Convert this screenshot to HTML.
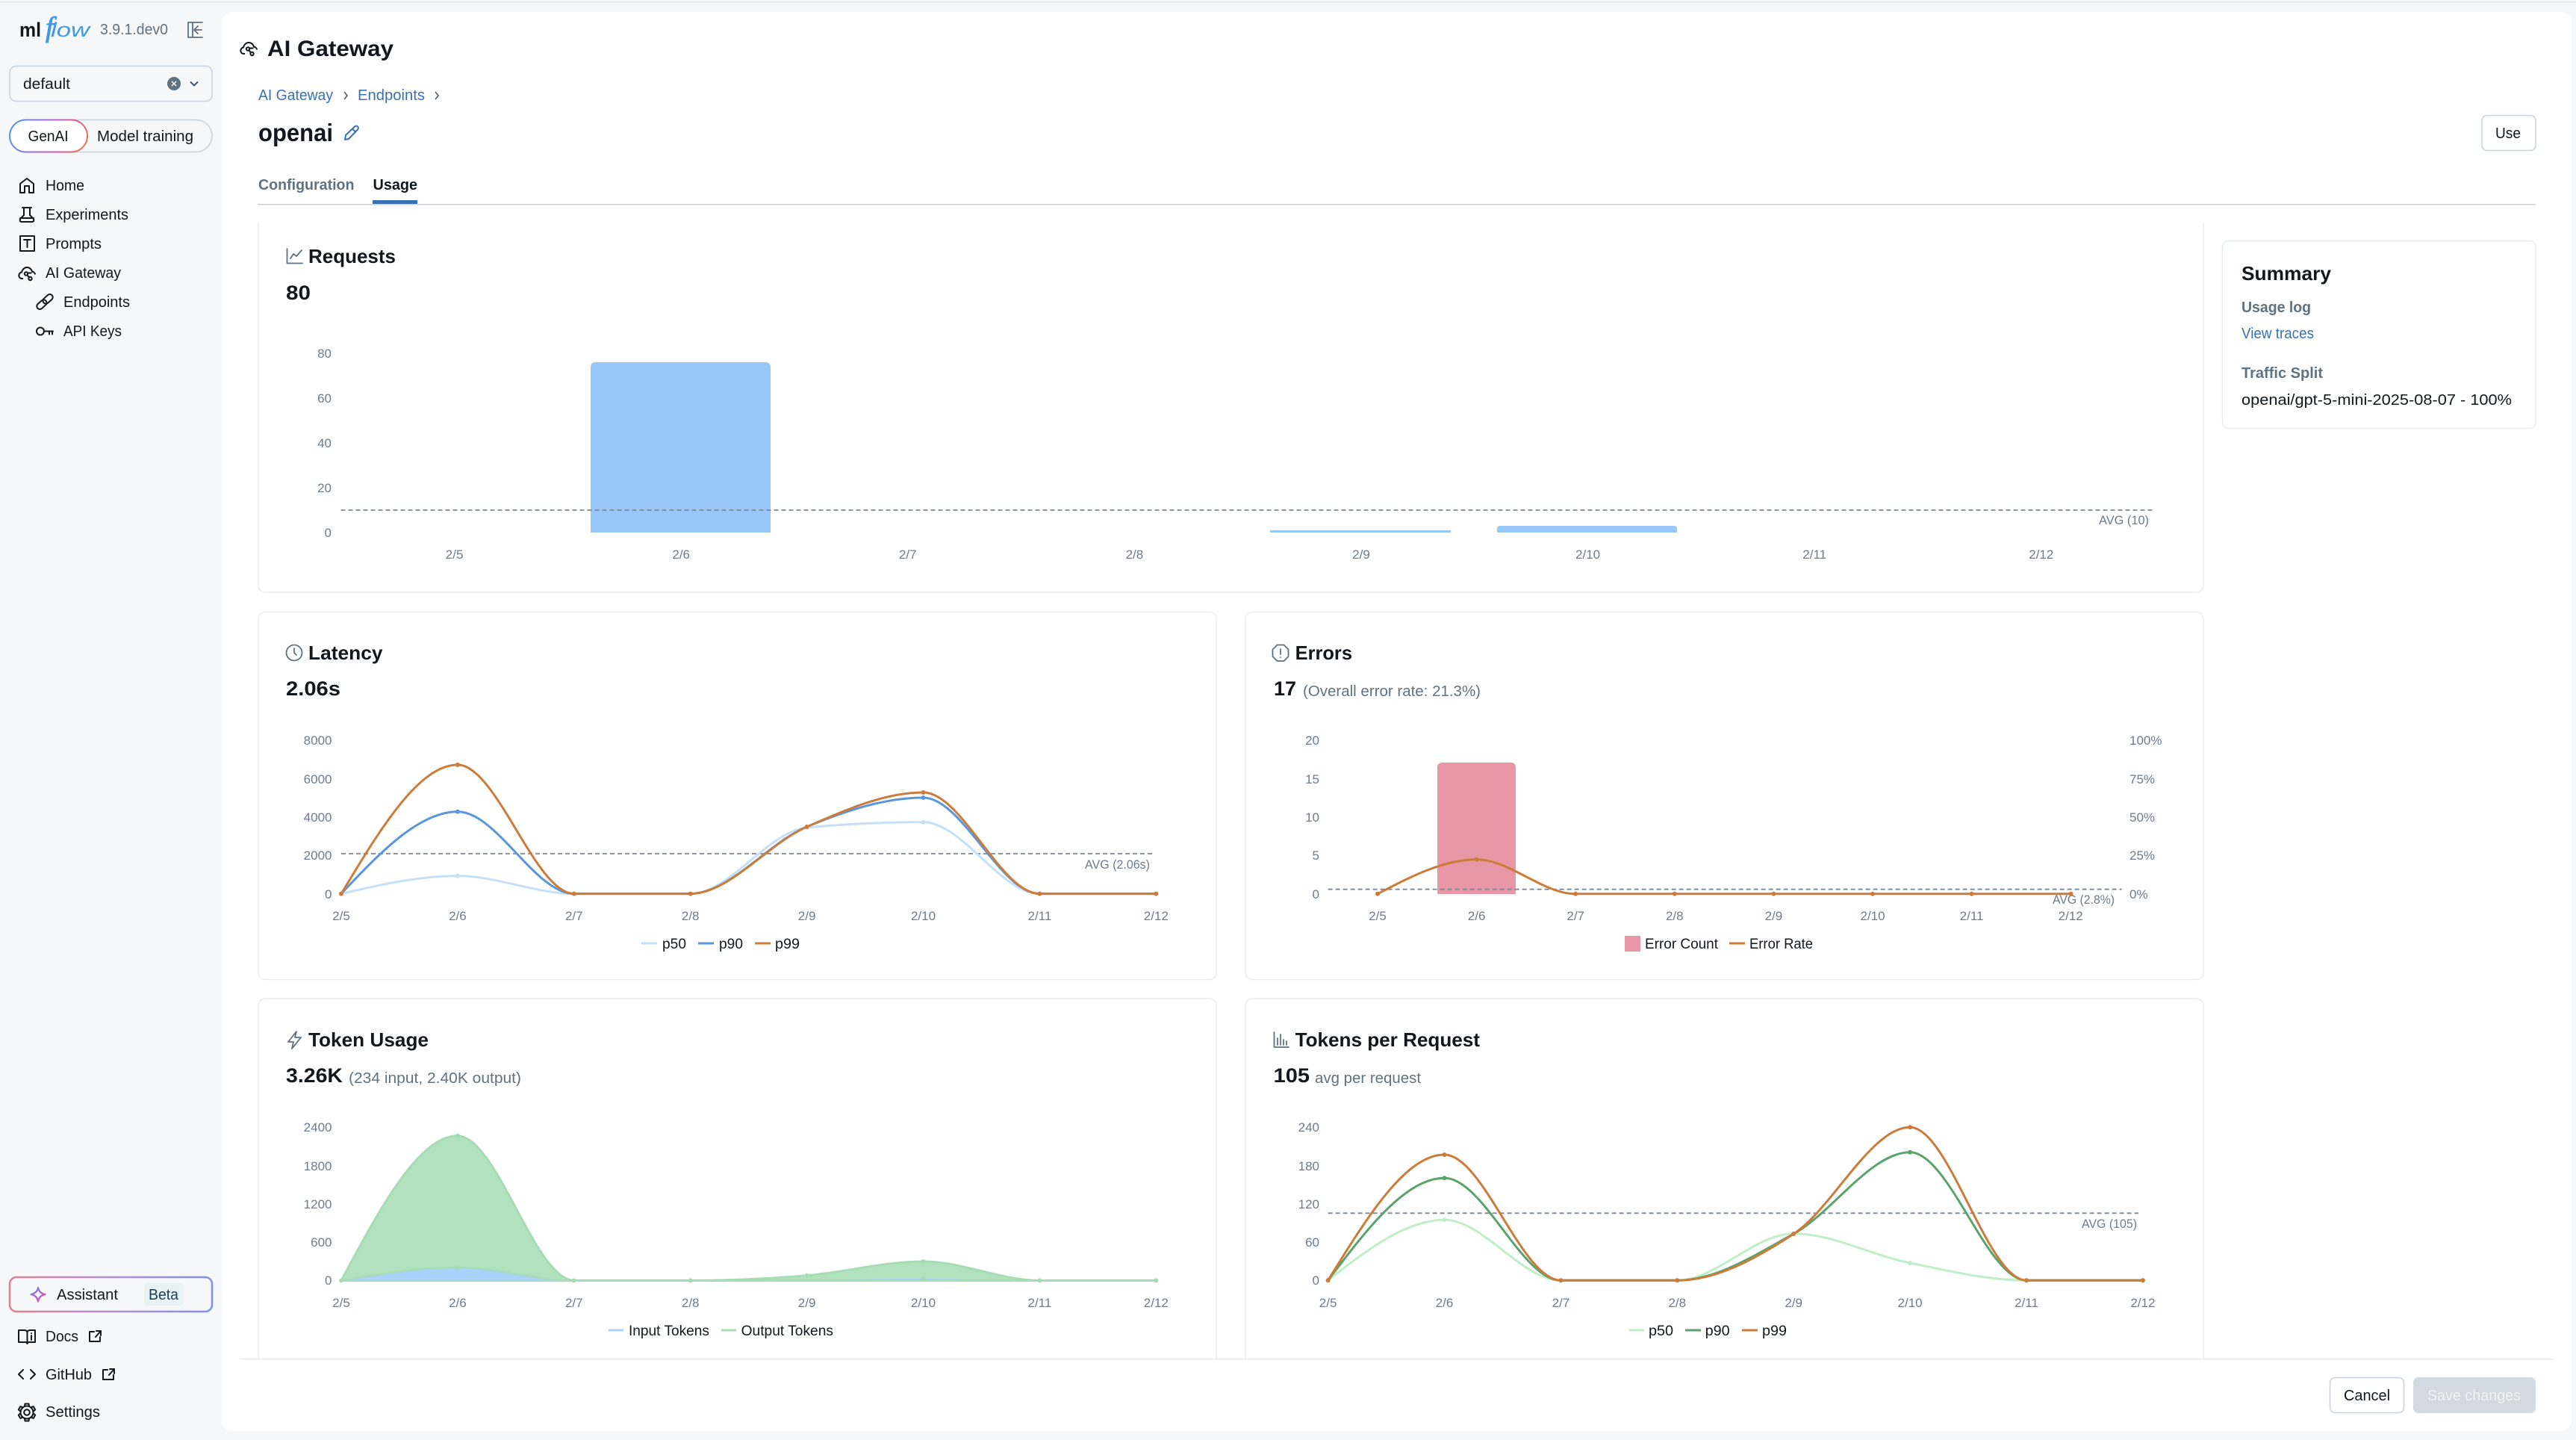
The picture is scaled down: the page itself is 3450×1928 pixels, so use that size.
<!DOCTYPE html>
<html><head><meta charset="utf-8"><title>AI Gateway</title>
<style>
html,body{margin:0;padding:0;background:#f6f7f9;width:3450px;height:1928px;overflow:hidden}
svg{display:block;font-family:"Liberation Sans",sans-serif}
.n{font-size:20px;fill:#11171c}
.s{font-size:20px;fill:#5f7281}
.t{font-size:26px;font-weight:700;fill:#11171c}
.v{font-size:27px;font-weight:700;fill:#11171c}
.b{font-size:20px;fill:#3a70b5}
.sb{font-size:20px;font-weight:700;fill:#5f7281}
.y,.x,.a{font-size:17px;fill:#6d7b8c}
.y{text-anchor:end}.x{text-anchor:middle}
.l{font-size:19px;fill:#11171c}
.ic{fill:none;stroke:#11171c;stroke-width:2;stroke-linecap:round;stroke-linejoin:round}
.ig{fill:none;stroke:#5f7281;stroke-width:1.8;stroke-linecap:round;stroke-linejoin:round}
.card{fill:#fff;stroke:#e8ecf1;stroke-width:1.5}
.avg{stroke:#7e8894;stroke-width:1.8;stroke-dasharray:6 4;fill:none}
.ln{fill:none;stroke-width:3}
.dt{fill:none;stroke-width:6;stroke-linecap:round}
</style></head><body>
<svg width="3450" height="1928" viewBox="0 0 3450 1928" xmlns="http://www.w3.org/2000/svg">
<defs>
<linearGradient id="gg" gradientUnits="userSpaceOnUse" x1="12" y1="160" x2="117" y2="204"><stop offset="0" stop-color="#4a9be0"/><stop offset=".45" stop-color="#a76ae0"/><stop offset=".75" stop-color="#e05f8c"/><stop offset="1" stop-color="#f0764a"/></linearGradient>
<linearGradient id="ag" gradientUnits="userSpaceOnUse" x1="12" y1="0" x2="284" y2="0"><stop offset="0" stop-color="#e0808a"/><stop offset=".5" stop-color="#b48cd6"/><stop offset="1" stop-color="#7c92ee"/></linearGradient>
<linearGradient id="sg" gradientUnits="userSpaceOnUse" x1="41" y1="1725" x2="61" y2="1742"><stop offset="0" stop-color="#5c8ff0"/><stop offset=".5" stop-color="#b060e0"/><stop offset="1" stop-color="#f0506a"/></linearGradient>
<g id="gw"><path d="M5 16C1.5 15.5.5 12 2 9.500 3 8 4 7.500 5 7.500 6 3.500 9 1 12 1c3 0 6 2 7 5.500 2 .5 4 2 4 4" fill="none"/><path d="M5 16H7" fill="none"/><circle cx="11" cy="9.500" r="2.200" fill="none"/><circle cx="16.500" cy="16" r="2.200" fill="none"/><path d="M12.500 11.500l2.700 2.800M13.500 8.500h5" fill="none"/></g>
</defs>

<rect width="3450" height="1928" fill="#f6f7f9"/>
<rect y="2" width="3450" height="1.500" fill="#e3e5e7"/>
<rect x="297" y="16" width="3147" height="1900" rx="14" fill="#fff"/>

<!-- sidebar header -->
<text x="26" y="49" font-size="27" font-weight="700" fill="#11171c" textLength="29" lengthAdjust="spacingAndGlyphs">ml</text>
<text x="61" y="49" font-family="Liberation Serif" font-size="38" font-style="italic" fill="#3d9be9" stroke="#3d9be9" stroke-width=".9">f</text>
<text x="68" y="49" font-size="27" font-style="italic" fill="#3d9be9" textLength="52" lengthAdjust="spacingAndGlyphs">low</text>
<text class="s" x="134" y="46" textLength="91" lengthAdjust="spacingAndGlyphs">3.9.1.dev0</text>
<path class="ig" stroke-width="2.400" d="M271 30H252V50H271M258 30V50M270 40h-9M265 35l-5 5 5 5"/>

<rect x="13" y="88.500" width="271" height="47" rx="8" fill="#f6f7f9" stroke="#c8d2de" stroke-width="1.500"/>
<text class="n" x="31" y="119" textLength="63" lengthAdjust="spacingAndGlyphs">default</text>
<circle cx="233" cy="112" r="9" fill="#5f7281"/>
<path d="M230 109l6 6M236 109l-6 6" stroke="#fff" stroke-width="1.500"/>
<path d="M255 109.500l5 5 5-5" fill="none" stroke="#44546a" stroke-width="2"/>

<rect x="13" y="160.500" width="271" height="43" rx="21.500" fill="#f6f7f9" stroke="#c8d2de" stroke-width="1.500"/>
<rect x="13" y="160.500" width="104" height="43" rx="21.500" fill="#fff" stroke="url(#gg)" stroke-width="2"/>
<text class="n" x="37.500" y="189" textLength="54" lengthAdjust="spacingAndGlyphs">GenAI</text>
<text class="n" x="130" y="189" textLength="129" lengthAdjust="spacingAndGlyphs">Model training</text>

<!-- nav -->
<path class="ic" d="M36 239L27 246V258H33V249H39V258H45V246Z"/>
<text class="n" x="61" y="255" textLength="52" lengthAdjust="spacingAndGlyphs">Home</text>
<path class="ic" d="M30 278H42M32 278V288L27 293Q26 297 29 297H43Q46 297 45 293L40 288V278M27 292H45"/>
<text class="n" x="61" y="294" textLength="111" lengthAdjust="spacingAndGlyphs">Experiments</text>
<rect class="ic" x="27" y="316" width="19" height="20"/>
<path class="ic" d="M32 321H41M36.500 321V331"/>
<text class="n" x="61" y="333" textLength="75" lengthAdjust="spacingAndGlyphs">Prompts</text>
<use href="#gw" x="24" y="357" stroke="#11171c" stroke-width="2"/>
<text class="n" x="61" y="372" textLength="101" lengthAdjust="spacingAndGlyphs">AI Gateway</text>
<g class="ic" transform="rotate(-42 60 404)"><rect x="47" y="400" width="15" height="8" rx="4"/><rect x="58" y="400" width="15" height="8" rx="4"/></g>
<text class="n" x="85" y="411" textLength="89" lengthAdjust="spacingAndGlyphs">Endpoints</text>
<circle class="ic" cx="54" cy="443.500" r="5"/>
<path class="ic" d="M59 443.500H71M66 443.500v4M70 443.500v4"/>
<text class="n" x="85" y="450" textLength="78" lengthAdjust="spacingAndGlyphs">API Keys</text>

<!-- sidebar bottom -->
<rect x="13" y="1710" width="271" height="46" rx="9" fill="#f6f7f9" stroke="url(#ag)" stroke-width="2.500"/>
<path d="M51 1724Q52.500 1731.500 60.500 1733 52.500 1734.500 51 1742.500 49.500 1734.500 41.500 1733 49.500 1731.500 51 1724Z" fill="none" stroke="url(#sg)" stroke-width="2.200" stroke-linejoin="round"/>
<text class="n" x="76" y="1740" textLength="82" lengthAdjust="spacingAndGlyphs">Assistant</text>
<rect x="193" y="1718" width="53" height="30" rx="5" fill="#e8f2f4"/>
<text x="199" y="1740" font-size="20" fill="#1c3f4e" textLength="40" lengthAdjust="spacingAndGlyphs">Beta</text>
<path class="ic" d="M25 1781h8q3 0 3.500 3 .5-3 3.500-3h7v16h-8q-2 0-2.500 2-.5-2-2.500-2h-9zM36.500 1784v14M42 1788v6M42 1785v.1"/>
<text class="n" x="61" y="1796" textLength="44" lengthAdjust="spacingAndGlyphs">Docs</text>
<path class="ic" d="M126 1783H120V1796H134V1790M128 1790L135 1782M129 1782H135V1788"/>
<path class="ic" d="M31 1834L25 1840L31 1846M41 1834L47 1840L41 1846"/>
<text class="n" x="61" y="1847" textLength="62" lengthAdjust="spacingAndGlyphs">GitHub</text>
<path class="ic" d="M144 1834H138V1847H152V1841M146 1841L153 1833M147 1833H153V1839"/>
<g class="ic" transform="translate(36 1891)"><circle r="8.500"/><circle r="3.800"/>
<path d="M-3-8.500L-2.500-11.500H2.500L3-8.500"/><path d="M-3-8.500L-2.500-11.500H2.500L3-8.500" transform="rotate(60)"/><path d="M-3-8.500L-2.500-11.500H2.500L3-8.500" transform="rotate(120)"/><path d="M-3-8.500L-2.500-11.500H2.500L3-8.500" transform="rotate(180)"/><path d="M-3-8.500L-2.500-11.500H2.500L3-8.500" transform="rotate(240)"/><path d="M-3-8.500L-2.500-11.500H2.500L3-8.500" transform="rotate(300)"/></g>
<text class="n" x="61" y="1897" textLength="73" lengthAdjust="spacingAndGlyphs">Settings</text>

<!-- header -->
<use href="#gw" x="321" y="56" stroke="#11171c" stroke-width="2"/>
<text x="358" y="75" font-size="30" font-weight="700" fill="#11171c" textLength="169" lengthAdjust="spacingAndGlyphs">AI Gateway</text>
<text class="b" x="346" y="134" textLength="100" lengthAdjust="spacingAndGlyphs">AI Gateway</text>
<path d="M461 123l4 5-4 5M583 123l4 5-4 5" fill="none" stroke="#44546a" stroke-width="1.500"/>
<text class="b" x="479" y="134" textLength="90" lengthAdjust="spacingAndGlyphs">Endpoints</text>
<text x="346" y="189" font-size="33" font-weight="700" fill="#11171c" textLength="100" lengthAdjust="spacingAndGlyphs">openai</text>
<path d="M462 187l1-6L475 169.500a2.500 2.500 0 0 1 4 4L467 186ZM472 172.500l4 4" fill="none" stroke="#3a70b5" stroke-width="2" stroke-linejoin="round"/>
<text class="sb" x="346" y="254" textLength="128.500" lengthAdjust="spacingAndGlyphs">Configuration</text>
<text x="499.500" y="254" font-size="20" font-weight="700" fill="#11171c" textLength="59.500" lengthAdjust="spacingAndGlyphs">Usage</text>
<rect x="345" y="273" width="3051" height="1.500" fill="#c8d2de"/>
<rect x="499" y="268" width="60" height="5" fill="#3a70b5"/>
<rect x="3324" y="154.500" width="72" height="47" rx="7" fill="#fff" stroke="#c8d2de" stroke-width="1.500"/>
<text class="n" x="3342" y="185" textLength="34" lengthAdjust="spacingAndGlyphs">Use</text>

<!-- Requests card -->
<path d="M346 298V784a9 9 0 0 0 9 9H2942a9 9 0 0 0 9-9V298" fill="#fff" stroke="#e8ecf1" stroke-width="1.500"/>
<path class="ig" d="M384.500 333V352.500H405M389 346l4-6 4 3 7-8"/>
<text class="t" x="413" y="352" textLength="117" lengthAdjust="spacingAndGlyphs">Requests</text>
<text class="v" x="383" y="401" textLength="33" lengthAdjust="spacingAndGlyphs">80</text>
<g class="y"><text x="444" y="479">80</text><text x="444" y="539">60</text><text x="444" y="599">40</text><text x="444" y="659">20</text><text x="444" y="719">0</text></g>
<path d="M791 713V491a6 6 0 0 1 6-6H1026a6 6 0 0 1 6 6V713Z" fill="#99c7fa"/>
<rect x="1701" y="710" width="242" height="3" fill="#99c7fa"/>
<path d="M2005 713V708a4 4 0 0 1 4-4H2242a4 4 0 0 1 4 4V713Z" fill="#99c7fa"/>
<path class="avg" d="M456.500 683H2886"/>
<text class="a" x="2811" y="702" textLength="67" lengthAdjust="spacingAndGlyphs">AVG (10)</text>
<g class="x"><text x="608.600" y="748">2/5</text><text x="912.200" y="748">2/6</text><text x="1215.800" y="748">2/7</text><text x="1519.400" y="748">2/8</text><text x="1823" y="748">2/9</text><text x="2126.600" y="748">2/10</text><text x="2430.200" y="748">2/11</text><text x="2733.800" y="748">2/12</text></g>

<!-- Latency card -->
<rect class="card" x="346" y="819.500" width="1283" height="492" rx="9"/>
<circle class="ig" cx="394" cy="874" r="10.500"/>
<path class="ig" d="M394 868v6l3 3"/>
<text class="t" x="413" y="883" textLength="99.500" lengthAdjust="spacingAndGlyphs">Latency</text>
<text class="v" x="383" y="931" textLength="73" lengthAdjust="spacingAndGlyphs">2.06s</text>
<g class="y"><text x="444.500" y="997">8000</text><text x="444.500" y="1049">6000</text><text x="444.500" y="1100">4000</text><text x="444.500" y="1151">2000</text><text x="444.500" y="1203">0</text></g>
<path class="avg" d="M457 1143H1544"/>
<text class="a" x="1453" y="1163" textLength="87" lengthAdjust="spacingAndGlyphs">AVG (2.06s)</text>
<g class="x"><text x="457" y="1232">2/5</text><text x="612.900" y="1232">2/6</text><text x="768.800" y="1232">2/7</text><text x="924.700" y="1232">2/8</text><text x="1080.600" y="1232">2/9</text><text x="1236.500" y="1232">2/10</text><text x="1392.400" y="1232">2/11</text><text x="1548.300" y="1232">2/12</text></g>
<g stroke="#c4e0f8">
<path class="ln" d="M457 1196.600C509 1184.600 561 1172.700 612.900 1172.700C665 1172.700 717 1196.600 768.800 1196.600L924.700 1196.600C976.700 1196.600 1028.600 1112.900 1080.600 1108C1132.600 1103.100 1184.500 1100.700 1236.500 1100.700C1288.500 1100.700 1340.400 1196.600 1392.400 1196.600L1548.300 1196.600"/>
<path class="dt" d="M457 1196.600h0M612.900 1172.700h0M1080.600 1108h0M1236.500 1100.700h0"/></g>
<g stroke="#5a96dc">
<path class="ln" d="M457 1196.600C509 1141.600 561 1086.700 612.900 1086.700C665 1086.700 717 1196.600 768.800 1196.600L924.700 1196.600C976.700 1196.600 1028.600 1128.400 1080.600 1107C1132.600 1085.600 1184.500 1068 1236.500 1068C1288.500 1068 1340.400 1196.600 1392.400 1196.600L1548.300 1196.600"/>
<path class="dt" d="M612.900 1086.700h0M1236.500 1068h0"/></g>
<g stroke="#cb7c3a">
<path class="ln" d="M457 1196.600C509 1110.300 561 1024 612.900 1024C665 1024 717 1196.600 768.800 1196.600L924.700 1196.600C976.700 1196.600 1028.600 1129.600 1080.600 1107C1132.600 1084.400 1184.500 1061 1236.500 1061C1288.500 1061 1340.400 1196.600 1392.400 1196.600L1548.300 1196.600"/>
<path class="dt" d="M457 1196.600h0M612.900 1024h0M768.800 1196.600h0M924.700 1196.600h0M1080.600 1107h0M1236.500 1061h0M1392.400 1196.600h0M1548.300 1196.600h0"/></g>
<rect x="859" y="1261.500" width="21" height="3" fill="#c4e0f8"/><text class="l" x="887" y="1270" textLength="32" lengthAdjust="spacingAndGlyphs">p50</text>
<rect x="935" y="1261.500" width="21" height="3" fill="#5a96dc"/><text class="l" x="963" y="1270" textLength="32" lengthAdjust="spacingAndGlyphs">p90</text>
<rect x="1011" y="1261.500" width="21" height="3" fill="#cb7c3a"/><text class="l" x="1038" y="1270" textLength="33" lengthAdjust="spacingAndGlyphs">p99</text>

<!-- Errors card -->
<rect class="card" x="1668" y="819.500" width="1283" height="492" rx="9"/>
<path class="ig" d="M1710.500 863.500h9l6 6v9.500l-6 6h-9l-6-6v-9.500ZM1715 869v7M1715 880v.1"/>
<text class="t" x="1734.600" y="883" textLength="76.400" lengthAdjust="spacingAndGlyphs">Errors</text>
<text class="v" x="1706" y="931" textLength="30" lengthAdjust="spacingAndGlyphs">17</text>
<text class="s" x="1745" y="932" textLength="238" lengthAdjust="spacingAndGlyphs">(Overall error rate: 21.3%)</text>
<g class="y"><text x="1767" y="997">20</text><text x="1767" y="1049">15</text><text x="1767" y="1100">10</text><text x="1767" y="1151">5</text><text x="1767" y="1203">0</text></g>
<g class="a"><text x="2852" y="997">100%</text><text x="2852" y="1049">75%</text><text x="2852" y="1100">50%</text><text x="2852" y="1151">25%</text><text x="2852" y="1203">0%</text></g>
<path d="M1925 1197V1027a6 6 0 0 1 6-6H2024a6 6 0 0 1 6 6V1197Z" fill="#e996a6"/>
<path class="avg" d="M1778.600 1190.700H2841.600"/>
<text class="a" x="2749" y="1210" textLength="83" lengthAdjust="spacingAndGlyphs">AVG (2.8%)</text>
<g class="x"><text x="1845" y="1232">2/5</text><text x="1977.600" y="1232">2/6</text><text x="2110.200" y="1232">2/7</text><text x="2242.800" y="1232">2/8</text><text x="2375.400" y="1232">2/9</text><text x="2508" y="1232">2/10</text><text x="2640.600" y="1232">2/11</text><text x="2773.200" y="1232">2/12</text></g>
<g stroke="#cb7c3a">
<path class="ln" d="M1845 1196.800C1889.200 1173.750 1933.400 1150.700 1977.600 1150.700C2021.800 1150.700 2066 1196.800 2110.200 1196.800L2773.600 1196.800"/>
<path class="dt" d="M1845 1196.800h0M1977.600 1150.700h0M2110.200 1196.800h0M2242.800 1196.800h0M2375.400 1196.800h0M2508 1196.800h0M2640.600 1196.800h0M2773.600 1196.800h0"/></g>
<rect x="2176" y="1253" width="21" height="21" fill="#e996a6"/>
<text class="l" x="2203" y="1270" textLength="98" lengthAdjust="spacingAndGlyphs">Error Count</text>
<rect x="2316" y="1261.500" width="21" height="3" fill="#cb7c3a"/>
<text class="l" x="2343" y="1270" textLength="85" lengthAdjust="spacingAndGlyphs">Error Rate</text>

<!-- Token Usage card -->
<path d="M346 1819V1346a9 9 0 0 1 9-9H1620a9 9 0 0 1 9 9V1819" fill="#fff" stroke="#e8ecf1" stroke-width="1.500"/>
<path class="ig" d="M397 1381L386 1395H393L391 1404L403 1389H395Z"/>
<text class="t" x="413" y="1401" textLength="161" lengthAdjust="spacingAndGlyphs">Token Usage</text>
<text class="v" x="383" y="1449" textLength="76" lengthAdjust="spacingAndGlyphs">3.26K</text>
<text class="s" x="467" y="1450" textLength="231" lengthAdjust="spacingAndGlyphs">(234 input, 2.40K output)</text>
<g class="y"><text x="444.500" y="1515">2400</text><text x="444.500" y="1567">1800</text><text x="444.500" y="1618">1200</text><text x="444.500" y="1669">600</text><text x="444.500" y="1720">0</text></g>
<g class="x"><text x="457" y="1750">2/5</text><text x="612.900" y="1750">2/6</text><text x="768.800" y="1750">2/7</text><text x="924.700" y="1750">2/8</text><text x="1080.600" y="1750">2/9</text><text x="1236.500" y="1750">2/10</text><text x="1392.400" y="1750">2/11</text><text x="1548.300" y="1750">2/12</text></g>
<path d="M457 1714.500C509 1617.600 561 1520.700 612.900 1520.700C665 1520.700 717 1714.500 768.800 1714.500L924.700 1714.500C976.700 1714.500 1028.600 1712 1080.600 1707.700C1132.600 1703.400 1184.500 1689 1236.500 1689C1288.500 1689 1340.400 1714.500 1392.400 1714.500L1548.300 1714.500Z" fill="#b2e2bd" stroke="#a6dcb3" stroke-width="3"/>
<path d="M457 1714.500C509 1705.750 561 1697 612.900 1697C665 1697 717 1714.500 768.800 1714.500L924.700 1714.500C976.700 1714.500 1028.600 1714 1080.600 1713.500C1132.600 1713 1184.500 1712 1236.500 1712C1288.500 1712 1340.400 1714.500 1392.400 1714.500Z" fill="#abd0f9"/>
<path d="M457 1714.500C509 1705.750 561 1697 612.900 1697C665 1697 717 1714.500 768.800 1714.500" fill="none" stroke="#a9dab9" stroke-width="2.500"/>
<path d="M768.800 1714.500H1548.300" stroke="#a6dcb3" stroke-width="3"/>
<path class="dt" stroke="#a6dcb3" d="M457 1714.500h0M612.900 1520.700h0M612.900 1697h0M768.800 1714.500h0M924.700 1714.500h0M1080.600 1707.700h0M1236.500 1689h0M1236.500 1712h0M1392.400 1714.500h0M1548.300 1714.500h0"/>
<rect x="815" y="1779.500" width="20" height="3" fill="#abd0f9"/><text class="l" x="842" y="1788" textLength="108" lengthAdjust="spacingAndGlyphs">Input Tokens</text>
<rect x="966" y="1779.500" width="20" height="3" fill="#a6dcb3"/><text class="l" x="992.600" y="1788" textLength="123.400" lengthAdjust="spacingAndGlyphs">Output Tokens</text>

<!-- Tokens per Request -->
<path d="M1668 1819V1346a9 9 0 0 1 9-9H2942a9 9 0 0 1 9 9V1819" fill="#fff" stroke="#e8ecf1" stroke-width="1.500"/>
<path class="ig" d="M1706.500 1382V1402H1726M1711 1390V1399M1715 1385V1399M1719 1392V1399M1723 1394V1399"/>
<text class="t" x="1734.600" y="1401" textLength="247.400" lengthAdjust="spacingAndGlyphs">Tokens per Request</text>
<text class="v" x="1705.600" y="1449" textLength="48.400" lengthAdjust="spacingAndGlyphs">105</text>
<text class="s" x="1761" y="1450" textLength="142" lengthAdjust="spacingAndGlyphs">avg per request</text>
<g class="y"><text x="1767" y="1515">240</text><text x="1767" y="1567">180</text><text x="1767" y="1618">120</text><text x="1767" y="1669">60</text><text x="1767" y="1720">0</text></g>
<path class="avg" d="M1778.600 1624.300H2864"/>
<text class="a" x="2788" y="1644" textLength="74" lengthAdjust="spacingAndGlyphs">AVG (105)</text>
<g class="x"><text x="1778.600" y="1750">2/5</text><text x="1934.500" y="1750">2/6</text><text x="2090.400" y="1750">2/7</text><text x="2246.300" y="1750">2/8</text><text x="2402.200" y="1750">2/9</text><text x="2558.100" y="1750">2/10</text><text x="2714" y="1750">2/11</text><text x="2869.900" y="1750">2/12</text></g>
<g stroke="#c1edc9">
<path class="ln" d="M1778.600 1714.300C1830.600 1673.800 1882.500 1633.300 1934.500 1633.300C1986.500 1633.300 2038.400 1714.300 2090.400 1714.300L2246.300 1714.300C2298.300 1714.300 2350.200 1651.700 2402.200 1651.700C2454.200 1651.700 2506.100 1680.600 2558.100 1691C2610.100 1701.400 2662 1714.300 2714 1714.300L2869.900 1714.300"/>
<path class="dt" d="M1934.500 1633.300h0M2402.200 1651.700h0M2558.100 1691h0"/></g>
<g stroke="#5ba36d">
<path class="ln" d="M1778.600 1714.300C1830.600 1645.800 1882.500 1577.300 1934.500 1577.300C1986.500 1577.300 2038.400 1714.300 2090.400 1714.300L2246.300 1714.300C2298.300 1714.300 2350.200 1680.600 2402.200 1652C2454.200 1623.400 2506.100 1542.700 2558.100 1542.700C2610.100 1542.700 2662 1714.300 2714 1714.300L2869.900 1714.300"/>
<path class="dt" d="M1934.500 1577.300h0M2558.100 1542.700h0"/></g>
<g stroke="#cb7c3a">
<path class="ln" d="M1778.600 1714.300C1830.600 1630.200 1882.500 1546 1934.500 1546C1986.500 1546 2038.400 1714.300 2090.400 1714.300L2246.300 1714.300C2298.300 1714.300 2350.200 1686.200 2402.200 1652C2454.200 1617.800 2506.100 1509.300 2558.100 1509.300C2610.100 1509.300 2662 1714.300 2714 1714.300L2869.900 1714.300"/>
<path class="dt" d="M1778.600 1714.300h0M1934.500 1546h0M2090.400 1714.300h0M2246.300 1714.300h0M2402.200 1652h0M2558.100 1509.300h0M2714 1714.300h0M2869.900 1714.300h0"/></g>
<rect x="2181" y="1779.500" width="21" height="3" fill="#c1edc9"/><text class="l" x="2208" y="1788" textLength="33" lengthAdjust="spacingAndGlyphs">p50</text>
<rect x="2257" y="1779.500" width="21" height="3" fill="#5ba36d"/><text class="l" x="2283.600" y="1788" textLength="33" lengthAdjust="spacingAndGlyphs">p90</text>
<rect x="2333" y="1779.500" width="21" height="3" fill="#cb7c3a"/><text class="l" x="2360" y="1788" textLength="33" lengthAdjust="spacingAndGlyphs">p99</text>

<!-- Summary -->
<rect class="card" x="2976.500" y="322.500" width="419.500" height="251" rx="8"/>
<text class="t" x="3002" y="375" textLength="120" lengthAdjust="spacingAndGlyphs">Summary</text>
<text class="sb" x="3002" y="418" textLength="93" lengthAdjust="spacingAndGlyphs">Usage log</text>
<text class="b" x="3002" y="453" textLength="97" lengthAdjust="spacingAndGlyphs">View traces</text>
<text class="sb" x="3002" y="506" textLength="109" lengthAdjust="spacingAndGlyphs">Traffic Split</text>
<text class="n" x="3002" y="542" textLength="362" lengthAdjust="spacingAndGlyphs">openai/gpt-5-mini-2025-08-07 - 100%</text>

<!-- footer -->
<path d="M297 1902a14 14 0 0 0 14 14H3430a14 14 0 0 0 14-14V1820H297Z" fill="#fff"/>
<rect x="321" y="1819" width="3099" height="1.500" fill="#e8ecf1"/>
<rect x="3120.500" y="1844.500" width="99" height="47" rx="7" fill="#fff" stroke="#c8d2de" stroke-width="1.500"/>
<text class="n" x="3139" y="1875" textLength="62" lengthAdjust="spacingAndGlyphs">Cancel</text>
<rect x="3232" y="1844" width="164" height="48" rx="7" fill="#d2d9e1"/>
<text x="3251" y="1875" font-size="20" fill="#f0f3f6" textLength="125" lengthAdjust="spacingAndGlyphs">Save changes</text>
</svg>
</body></html>
